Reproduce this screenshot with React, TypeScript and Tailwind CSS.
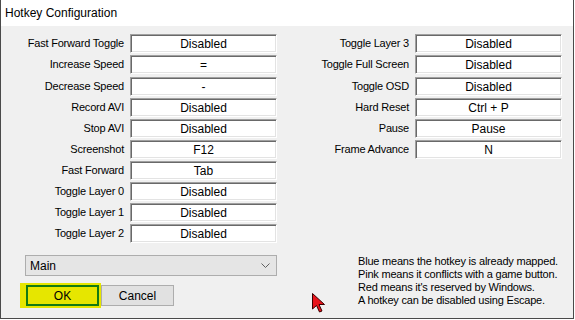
import React from 'react';

type Row = [string, string];

const leftRows: Row[] = [
  ['Fast Forward Toggle', 'Disabled'],
  ['Increase Speed', '='],
  ['Decrease Speed', '-'],
  ['Record AVI', 'Disabled'],
  ['Stop AVI', 'Disabled'],
  ['Screenshot', 'F12'],
  ['Fast Forward', 'Tab'],
  ['Toggle Layer 0', 'Disabled'],
  ['Toggle Layer 1', 'Disabled'],
  ['Toggle Layer 2', 'Disabled'],
];

const rightRows: Row[] = [
  ['Toggle Layer 3', 'Disabled'],
  ['Toggle Full Screen', 'Disabled'],
  ['Toggle OSD', 'Disabled'],
  ['Hard Reset', 'Ctrl + P'],
  ['Pause', 'Pause'],
  ['Frame Advance', 'N'],
];

const notes = [
  'Blue means the hotkey is already mapped.',
  'Pink means it conflicts with a game button.',
  "Red means it's reserved by Windows.",
  'A hotkey can be disabled using Escape.',
];

// sunken win32 edit control
function HotkeyBox({ value }: { value: string }) {
  return (
    <div className="h-[19px] w-[147px] border border-t-[#a0a0a0] border-l-[#a0a0a0] border-b-white border-r-white bg-white shadow-[inset_1px_1px_0_#696969,inset_-1px_-1px_0_#e3e3e3] flex items-center justify-center text-[12px] text-black">
      {value}
    </div>
  );
}

function HotkeyColumn({ rows, labelWidth }: { rows: Row[]; labelWidth: string }) {
  return (
    <div className="flex flex-col gap-[2px]">
      {rows.map(([label, value], i) => (
        <div key={label} className={`flex items-center gap-[6px] h-[19px] ${i === 2 ? 'mt-[1px]' : ''}`}>
          <div className={`${labelWidth} text-right text-[11px] tracking-[-0.2px] text-black whitespace-nowrap`}>
            {label}
          </div>
          <HotkeyBox value={value} />
        </div>
      ))}
    </div>
  );
}

function Cursor() {
  return (
    <svg
      className="absolute left-[311px] top-[293px]"
      width="15"
      height="20"
      viewBox="0 0 15 20"
    >
      <path
        d="M0.5 0.5 L0.5 16 L4.5 12.5 L7.5 19 L10 18 L7 11.5 L12.5 11.5 Z"
        fill="#e8141c"
        stroke="#3a0000"
        strokeWidth="1"
        strokeLinejoin="miter"
      />
    </svg>
  );
}

export default function App() {
  return (
    <div
      className="relative w-[574px] h-[319px] border-l border-r border-b border-[#4a4a4a] bg-[#f0f0f0] flex flex-col"
      style={{ fontFamily: '"Liberation Sans", Arial, sans-serif' }}
    >
      {/* title bar */}
      <div className="h-[26px] bg-white flex items-center pl-[4px] text-[12px] text-black">
        Hotkey Configuration
      </div>

      {/* hotkey grid */}
      <div className="flex pt-[8px]">
        <HotkeyColumn rows={leftRows} labelWidth="w-[123px]" />
        <HotkeyColumn rows={rightRows} labelWidth="w-[132px]" />
      </div>

      {/* bottom area */}
      <div className="flex mt-[12px]">
        <div className="flex flex-col pl-[19px]">
          <div className="ml-[5px] w-[252px] h-[21px] border border-[#adadad] bg-[#e5e5e5] flex items-center justify-between pl-[4px] pr-[6px] text-[12px] text-black">
            <span>Main</span>
            <svg width="9" height="5" viewBox="0 0 9 5">
              <path d="M0.5 0.5 L4.5 4.5 L8.5 0.5" fill="none" stroke="#606060" strokeWidth="1" />
            </svg>
          </div>
          <div className="flex items-center mt-[7px]">
            <div className="bg-[#e6e600] pl-[6px] pr-[2px] py-[2px]">
              <button className="w-[73px] h-[21px] border-2 border-[#137a13] bg-[#e6e600] flex items-center justify-center text-[12px] text-black">
                OK
              </button>
            </div>
            <button className="w-[73px] h-[21px] border border-[#adadad] bg-[#e1e1e1] flex items-center justify-center text-[12px] text-black">
              Cancel
            </button>
          </div>
        </div>
        <div className="ml-[81px] flex flex-col text-[11px] leading-[13px] tracking-[-0.2px] text-black">
          {notes.map((n) => (
            <div key={n} className="whitespace-nowrap">
              {n}
            </div>
          ))}
        </div>
      </div>

      <Cursor />
    </div>
  );
}
